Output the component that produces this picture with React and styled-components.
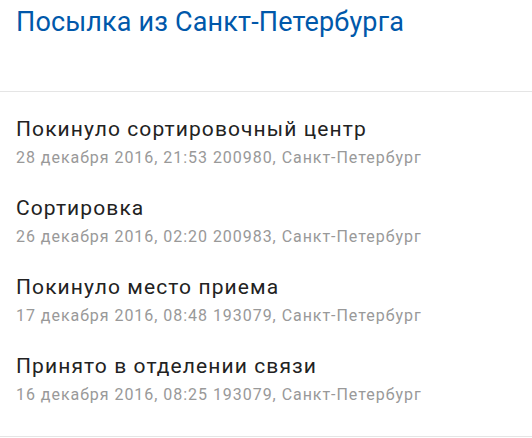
import React from "react";
import styled, { createGlobalStyle } from "styled-components";

const Global = createGlobalStyle`
  html, body { margin: 0; padding: 0; background: #fff; }
  body { font-family: Roboto, "Noto Sans", Arial, sans-serif; }
`;

const Page = styled.div`
  width: 532px;
`;

const Header = styled.header`
  height: 92px;
  padding: 5px 16px 0;
  box-sizing: border-box;
  border-bottom: 1px solid #e5e5e5;
`;

const Title = styled.h1`
  margin: 0;
  font-size: 27px;
  line-height: 34px;
  font-weight: 400;
  letter-spacing: 0.15px;
  color: #0058aa;
`;

const List = styled.ul`
  list-style: none;
  margin: 0;
  padding: 23px 16px 30px;
  border-bottom: 1px solid #e5e5e5;
`;

const Item = styled.li`
  display: flex;
  flex-direction: column;
  & + & {
    margin-top: 25px;
  }
`;

const Event = styled.div`
  font-size: 21px;
  line-height: 28px;
  letter-spacing: 1.1px;
  color: #222;
`;

const Meta = styled.div`
  margin-top: 4px;
  font-size: 16px;
  line-height: 22px;
  letter-spacing: 0.96px;
  color: #999;
`;

const events = [
  ["Покинуло сортировочный центр", "28 декабря 2016, 21:53 200980, Санкт-Петербург"],
  ["Сортировка", "26 декабря 2016, 02:20 200983, Санкт-Петербург"],
  ["Покинуло место приема", "17 декабря 2016, 08:48 193079, Санкт-Петербург"],
  ["Принято в отделении связи", "16 декабря 2016, 08:25 193079, Санкт-Петербург"],
];

export default function App() {
  return (
    <Page>
      <Global />
      <Header>
        <Title>Посылка из Санкт-Петербурга</Title>
      </Header>
      <List>
        {events.map(([e, m]) => (
          <Item key={m}>
            <Event>{e}</Event>
            <Meta>{m}</Meta>
          </Item>
        ))}
      </List>
    </Page>
  );
}
